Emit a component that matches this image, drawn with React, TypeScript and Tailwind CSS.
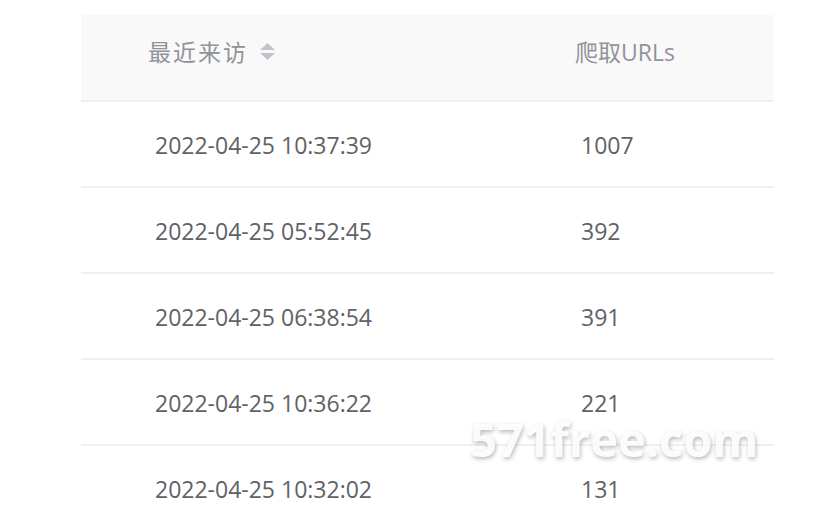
const rows = [
  { time: '2022-04-25 10:37:39', urls: 1007 },
  { time: '2022-04-25 05:52:45', urls: 392 },
  { time: '2022-04-25 06:38:54', urls: 391 },
  { time: '2022-04-25 10:36:22', urls: 221 },
  { time: '2022-04-25 10:32:02', urls: 131 },
]

function SortIcon() {
  return (
    <svg width="17" height="19" viewBox="0 0 17 19" className="ml-[11px] mb-[2px]">
      <path d="M8.5 1 L16 8 L1 8 Z" fill="#c0c4cc" />
      <path d="M8.5 18 L16 11 L1 11 Z" fill="#c0c4cc" />
    </svg>
  )
}

export default function App() {
  return (
    <div
      className="relative w-[833px] h-[516px] overflow-hidden bg-white"
      style={{ fontFamily: '"Open Sans", "Noto Sans CJK SC", sans-serif' }}
    >
      <div className="ml-[81px] mt-[15px] w-[693px] text-[23px]">
        <div className="grid grid-cols-[420px_1fr] h-[87px] bg-[#f9f9f9] border-b-2 border-[#edf0f5] text-[#909399]">
          <div className="flex items-center pl-[67px] pb-[10px]">
            <span className="tracking-[2px]">最近来访</span>
            <SortIcon />
          </div>
          <div className="flex items-center pl-[74px] pb-[10px]">爬取URLs</div>
        </div>
        {rows.map((r) => (
          <div
            key={r.time}
            className="grid grid-cols-[420px_1fr] h-[86px] border-b-2 border-[#edf0f5] text-[#606266]"
          >
            <div className="flex items-center pl-[74px] pt-[2px]">{r.time}</div>
            <div className="flex items-center pl-[80px] pt-[2px]">{r.urls}</div>
          </div>
        ))}
      </div>
      {/* watermark */}
      <div
        className="absolute left-[470px] top-[416px] text-[47px] leading-none font-bold text-white/95 select-none"
        style={{ textShadow: '1px 2px 4px rgba(0,0,0,0.28)' }}
      >
        571free.com
      </div>
    </div>
  )
}
